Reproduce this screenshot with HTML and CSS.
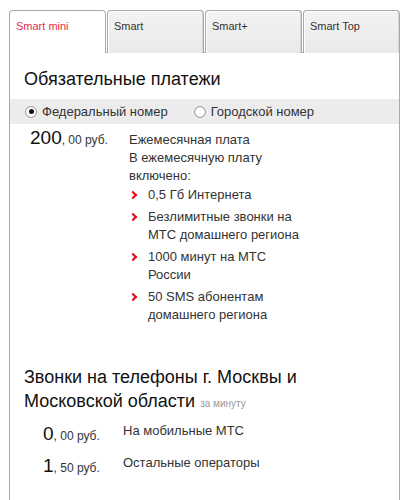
FILE: index.html
```html
<!DOCTYPE html>
<html lang="ru">
<head>
    <meta charset="UTF-8">
    <meta name="viewport" content="width=device-width, initial-scale=1.0">
    <title>Тарифы Smart</title>
    <link rel="stylesheet" href="styles.css">
</head>
<body>
    <div class="tariffs">
        <ul class="tabs">
            <li class="tab active">Smart mini</li>
            <li class="tab">Smart</li>
            <li class="tab">Smart+</li>
            <li class="tab">Smart Top</li>
        </ul>
        <div class="panel">
            <h2 class="section-title">Обязательные платежи</h2>
            <div class="number-type">
                <label class="radio checked"><span class="radio-mark"></span>Федеральный номер</label>
                <label class="radio"><span class="radio-mark"></span>Городской номер</label>
            </div>

            <div class="price-row main-fee">
                <div class="price"><span class="rub">200</span>, 00 руб.</div>
                <div class="price-text">
                    <p>Ежемесячная плата</p>
                    <p>В ежемесячную плату включено:</p>
                    <ul class="included">
                        <li>0,5 Гб Интернета</li>
                        <li>Безлимитные звонки на МТС домашнего региона</li>
                        <li>1000 минут на МТС России</li>
                        <li>50 SMS абонентам домашнего региона</li>
                    </ul>
                </div>
            </div>

            <h2 class="section-title calls">Звонки на телефоны г. Москвы и Московской области <small>за минуту</small></h2>
            <div class="price-row call">
                <div class="price"><span class="rub">0</span>, 00 руб.</div>
                <div class="price-text">На мобильные МТС</div>
            </div>
            <div class="price-row call">
                <div class="price"><span class="rub">1</span>, 50 руб.</div>
                <div class="price-text">Остальные операторы</div>
            </div>
        </div>
    </div>
</body>
</html>
```

FILE: styles.css
```css
body {
    font-family: "Liberation Sans", Arial, sans-serif;
    margin: 0;
    padding: 10px 0 0 9px;
    background-color: #fff;
    color: #333;
}

.tariffs {
    width: 391px;
}

.tabs {
    display: flex;
    gap: 1px;
    margin: 0;
    padding: 0;
    list-style: none;
    position: relative;
    z-index: 1;
}

.tab {
    box-sizing: border-box;
    width: 97px;
    height: 43px;
    padding: 8px 0 0 6px;
    font-size: 11px;
    line-height: 14px;
    color: #333;
    border: 1px solid #a9a9a9;
    border-bottom: none;
    border-radius: 4px 4px 0 0;
    background: linear-gradient(#f3f3f3, #e9e9e9);
    box-shadow: inset 1px 1px 0 #fff, inset -1px 0 0 #d6d6d6;
}

.tab.active {
    color: #ee2b47;
    background: #fff;
    box-shadow: none;
}

.panel {
    border: 1px solid #a9a9a9;
    border-bottom: none;
    margin-top: -1px;
    height: 448px;
    box-sizing: border-box;
    padding-top: 14px;
}

.section-title {
    margin: 0 0 0 14px;
    font-size: 18px;
    font-weight: normal;
    line-height: 24px;
    color: #111;
}

.section-title small {
    font-size: 10px;
    line-height: 1;
    color: #999;
}

.number-type {
    display: flex;
    gap: 26px;
    margin-top: 8px;
    padding: 0 0 0 15px;
    height: 25px;
    align-items: center;
    background-color: #ececec;
    font-size: 13px;
}

.radio {
    display: flex;
    align-items: center;
    gap: 5px;
}

.radio-mark {
    box-sizing: border-box;
    width: 12px;
    height: 12px;
    border: 1px solid #9a9a9a;
    border-radius: 50%;
    background: radial-gradient(#fff 50%, #e6e6e6);
    display: flex;
    align-items: center;
    justify-content: center;
}

.radio.checked .radio-mark::after {
    content: "";
    width: 5px;
    height: 5px;
    border-radius: 50%;
    background-color: #111;
}

.price-row {
    display: flex;
    font-size: 13px;
}

.price {
    font-size: 12px;
    color: #333;
    white-space: nowrap;
}

.price .rub {
    font-size: 19px;
    color: #111;
}

.main-fee {
    margin-top: 3px;
    padding-left: 20px;
}

.main-fee .price {
    width: 99px;
}

.price-text {
    line-height: 18px;
}

.main-fee .price-text {
    width: 175px;
    padding-top: 4px;
}

.price-text p {
    margin: 0;
}

.included {
    margin: 1px 0 0;
    padding: 0;
    list-style: none;
}

.included li {
    position: relative;
    padding-left: 19px;
    margin-bottom: 4px;
    width: 156px;
}

.included li::before {
    content: "";
    position: absolute;
    left: 1px;
    top: 6px;
    width: 4px;
    height: 4px;
    border-top: 2px solid #e30611;
    border-right: 2px solid #e30611;
    transform: rotate(45deg);
}

.calls {
    margin-top: 37px;
    width: 300px;
}

.call {
    padding-left: 33px;
    margin-top: 6px;
    line-height: 24px;
}

.calls + .call {
    margin-top: 9px;
}

.call .price {
    width: 80px;
}
```
